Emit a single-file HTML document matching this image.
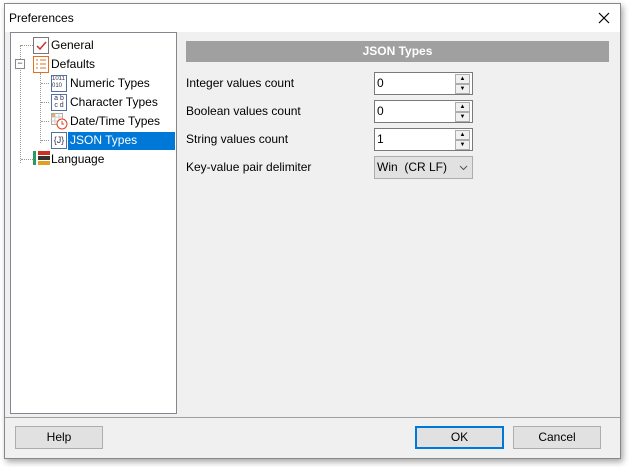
<!DOCTYPE html>
<html><head><meta charset="utf-8"><style>
body{margin:0;width:629px;height:467px;background:#fff;font-family:"Liberation Sans",sans-serif;font-size:12px;color:#000;position:relative;overflow:hidden}
.win{position:absolute;left:4px;top:3px;width:615px;height:454px;border:1px solid #888;background:#f0f0f0;box-shadow:2px 3px 6px rgba(0,0,0,.35)}
.title{position:absolute;left:0;top:0;right:0;height:28px;background:#fff}
.title span{position:absolute;left:4px;top:7px;font-size:12px}
.tree{position:absolute;left:5px;top:28px;width:165px;height:380px;background:#fff;border:1px solid #828790}
.abs{position:absolute}
.hdr{position:absolute;left:181px;top:37px;width:423px;height:21px;background:#a0a0a0;color:#fff;font-weight:bold;text-align:center;line-height:21px}
.lbl{position:absolute;left:181px}
.inp{position:absolute;left:369px;width:97px;height:21px;background:#fff;border:1px solid #7a7a7a}
.inp span{position:absolute;left:2px;top:3px}
.sp{position:absolute;right:2px;width:13px;height:8px;border:1px solid #adadad;background:#f0f0f0;font-size:6px;line-height:8px;text-align:center}
.btn{position:absolute;top:422px;height:21px;border:1px solid #adadad;background:#e1e1e1;text-align:center;line-height:21px}
.dot{position:absolute;border-left:1px dotted #999}
.doth{position:absolute;border-top:1px dotted #999}
.ti{position:absolute;font-size:12px}
.ic{position:absolute;width:14px;height:15px;border:1px solid #777;background:#fff;overflow:hidden}
</style></head><body>
<div class="win">
<div class="title"><span>Preferences</span>
<svg class="abs" style="left:593px;top:8px" width="12" height="12"><path d="M1 1L11 11M11 1L1 11" stroke="#000" stroke-width="1.2"/></svg></div>
<div class="tree">
<div class="dot" style="left:9px;top:12px;height:118px"></div>
<div class="dot" style="left:29px;top:40px;height:70px"></div>
<div class="doth" style="left:10px;top:12px;width:12px"></div>
<div class="doth" style="left:30px;top:50px;width:8px"></div>
<div class="doth" style="left:30px;top:69px;width:8px"></div>
<div class="doth" style="left:30px;top:88px;width:8px"></div>
<div class="doth" style="left:30px;top:107px;width:8px"></div>
<div class="doth" style="left:10px;top:126px;width:12px"></div>
<div class="abs" style="left:4px;top:26px;width:8px;height:8px;border:1px solid #888;background:#fff;font-size:9px;line-height:7px;text-align:center;color:#333">−</div>
<div class="ic" style="left:22px;top:4px"><svg width="14" height="15"><path d="M3 8l3 3 6-7" stroke="#d03030" stroke-width="1.5" fill="none"/></svg></div>
<div class="ti" style="left:40px;top:5px">General</div>
<div class="ic" style="left:22px;top:23px;border-color:#e07020"><svg width="14" height="15"><path d="M2 3h2M2 7h2M2 11h2M6 3h6M6 7h6M6 11h6" stroke="#e07020"/></svg></div>
<div class="ti" style="left:40px;top:24px">Defaults</div>
<div class="ic" style="left:40px;top:42px;border-color:#5070a0;font-size:6px;line-height:7px;color:#335">1011<br>010</div>
<div class="ti" style="left:59px;top:43px">Numeric Types</div>
<div class="ic" style="left:40px;top:61px;border-color:#5070a0;font-size:7px;line-height:7px;color:#335;text-align:center">a b<br>c d</div>
<div class="ti" style="left:59px;top:62px">Character Types</div>
<div class="abs" style="left:40px;top:80px;width:16px;height:17px"><svg width="17" height="17"><rect x="0.5" y="0.5" width="11" height="11" fill="#fff" stroke="#aaa"/><path d="M0.5 4h11M0.5 8h11M4 0.5v11M8 0.5v11" stroke="#ccc"/><rect x="1" y="1" width="3" height="3" fill="#e0b060"/><circle cx="11" cy="11" r="5" fill="#fff" stroke="#e04020"/><path d="M11 8v3h2" stroke="#e04020" fill="none"/></svg></div>
<div class="ti" style="left:59px;top:81px">Date/Time Types</div>
<div class="ic" style="left:40px;top:99px;border-color:#5070a0;font-size:9px;line-height:14px;text-align:center;color:#335">{J}</div>
<div class="abs" style="left:57px;top:99px;width:107px;height:18px;background:#0078d7"></div>
<div class="ti" style="left:59px;top:100px;color:#fff">JSON Types</div>
<div class="abs" style="left:22px;top:118px;width:3px;height:14px;background:#2a9a60"></div>
<div class="abs" style="left:27px;top:118px;width:12px;height:4px;background:#d03020"></div>
<div class="abs" style="left:27px;top:123px;width:12px;height:4px;background:#333"></div>
<div class="abs" style="left:27px;top:128px;width:12px;height:4px;background:#e0a020"></div>
<div class="ti" style="left:40px;top:119px">Language</div>
</div>
<div class="hdr">JSON Types</div>
<div class="lbl" style="top:72px">Integer values count</div>
<div class="lbl" style="top:100px">Boolean values count</div>
<div class="lbl" style="top:128px">String values count</div>
<div class="lbl" style="top:156px">Key-value pair delimiter</div>
<div class="inp" style="top:68px"><span>0</span><div class="sp" style="top:1px">▲</div><div class="sp" style="top:11px">▼</div></div>
<div class="inp" style="top:96px"><span>0</span><div class="sp" style="top:1px">▲</div><div class="sp" style="top:11px">▼</div></div>
<div class="inp" style="top:124px"><span>1</span><div class="sp" style="top:1px">▲</div><div class="sp" style="top:11px">▼</div></div>
<div class="inp" style="top:152px;background:#e1e1e1;border-color:#adadad"><span style="top:3px">Win&nbsp; (CR LF)</span><svg class="abs" style="left:84px;top:8px" width="9" height="6"><path d="M1 1l3.5 3.5L8 1" stroke="#555" fill="none"/></svg></div>
<div class="abs" style="left:0;top:413px;width:615px;border-top:1px solid #a0a0a0"></div>
<div class="btn" style="left:10px;width:86px">Help</div>
<div class="btn" style="left:410px;width:85px;border:2px solid #0078d7;height:19px;line-height:19px">OK</div>
<div class="btn" style="left:508px;width:86px">Cancel</div>
</div>
</body></html>
